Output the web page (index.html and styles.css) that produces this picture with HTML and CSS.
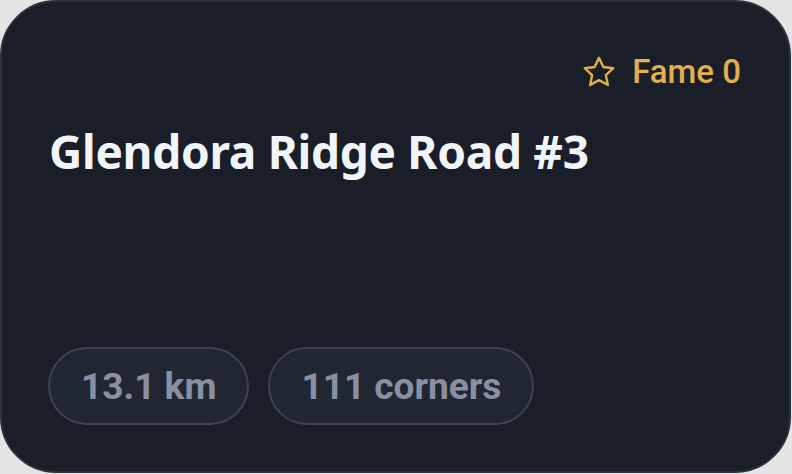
FILE: index.html
```html
<!DOCTYPE html>
<html>
<head>
<meta charset="utf-8">
<link rel="stylesheet" href="styles.css">
</head>
<body>
<div class="card">
  <div class="top">
    <div class="fame">
      <svg class="star" width="38" height="36" viewBox="0 0 24 24" fill="none" stroke="currentColor" stroke-width="1.6" stroke-linejoin="round"><path d="M12 2.5l2.9 6.2 6.6.8-4.9 4.6 1.3 6.6L12 17.4l-5.9 3.3 1.3-6.6-4.9-4.6 6.6-.8z"/></svg>
      <span>Fame 0</span>
    </div>
  </div>
  <h1 class="title">Glendora Ridge Road #3</h1>
  <div class="pills">
    <span class="pill">13.1 km</span>
    <span class="pill">111 corners</span>
  </div>
</div>
</body>
</html>
```
FILE: styles.css
```css
html, body { margin: 0; padding: 0; }
body {
  width: 792px; height: 474px;
  background: #e4e4e4;
  overflow: hidden;
}
.card {
  box-sizing: border-box;
  width: 791px; height: 473px;
  background: #1a1e29;
  border: 2px solid #2c303a;
  border-radius: 56px;
  padding: 51px 48px 46px 46px;
  display: flex;
  flex-direction: column;
}
.top { display: flex; justify-content: flex-end; }
.fame {
  display: flex; align-items: center; gap: 14px;
  color: #e1b04c;
  font-family: "Roboto", sans-serif;
  font-size: 33px;
  font-weight: 500;
  line-height: 38px;
}
.title {
  margin: 32px 0 0 1px;
  color: #f1f4f8;
  font-family: "Noto Sans", sans-serif;
  font-weight: 700;
  font-size: 46px;
  line-height: 56px;
  letter-spacing: -0.3px;
}
.pills { margin-top: auto; display: flex; gap: 19px; }
.pill {
  box-sizing: border-box;
  height: 78px;
  padding: 0 31px;
  display: flex; align-items: center;
  background: #212633;
  border: 2px solid #3d4352;
  border-radius: 40px;
  color: #8a90a1;
  font-family: "Roboto", sans-serif;
  font-weight: 700;
  font-size: 37px;
}
```
